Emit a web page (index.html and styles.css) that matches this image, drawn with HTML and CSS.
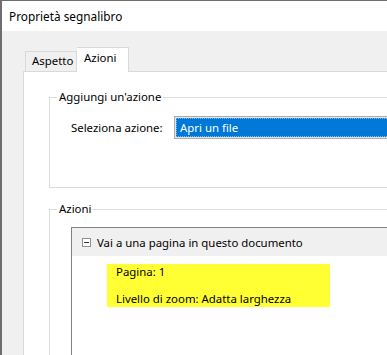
FILE: index.html
```html
<!DOCTYPE html>
<html lang="it">
<head>
  <meta charset="UTF-8">
  <title>Proprietà segnalibro</title>
  <link rel="stylesheet" href="styles.css">
</head>
<body>

  <div class="window">
    <div class="titlebar">Proprietà segnalibro</div>

    <div class="dialog">
      <div class="tabs">
        <div class="tab">Aspetto</div>
        <div class="tab active">Azioni</div>
      </div>

      <div class="panel">
        <fieldset class="group add-group">
          <legend>Aggiungi un'azione</legend>
          <div class="row">
            <span class="label">Seleziona azione:</span>
            <div class="select">
              <div class="select-value">Apri un file</div>
            </div>
          </div>
        </fieldset>

        <fieldset class="group actions-group">
          <legend>Azioni</legend>
          <div class="list">
            <div class="list-head">
              <svg class="toggle" width="9" height="9" viewBox="0 0 9 9">
                <rect x="0.5" y="0.5" width="8" height="8" fill="#fff" stroke="#919191"/>
                <line x1="2" y1="4.5" x2="7" y2="4.5" stroke="#333"/>
              </svg>
              <span>Vai a una pagina in questo documento</span>
            </div>
            <div class="detail">
              <div>Pagina: 1</div>
              <div>Livello di zoom: Adatta larghezza</div>
            </div>
          </div>
        </fieldset>
      </div>
    </div>
  </div>

</body>
</html>
```

FILE: styles.css
```css
* {
  margin: 0;
  padding: 0;
  box-sizing: border-box;
}

body {
  width: 387px;
  height: 355px;
  overflow: hidden;
  background-color: #ffffff;
  font-family: "Noto Sans", "Open Sans", sans-serif;
  font-size: 11.4px;
  color: #000;
}

.window {
  height: 355px;
  border-top: 1px solid #6e6e6e;
  border-left: 2px solid #6e6e6e;
  display: flex;
  flex-direction: column;
}

.titlebar {
  height: 30px;
  line-height: 30px;
  padding-left: 7px;
  font-size: 11.8px;
  background-color: #ffffff;
}

.dialog {
  flex: 1;
  min-height: 0;
  background-color: #f0f0f0;
  padding: 16px 0 0 21px;
  display: flex;
  flex-direction: column;
}

.tabs {
  display: flex;
  align-items: flex-end;
  height: 24px;
  padding-left: 2px;
  position: relative;
  z-index: 1;
}

.tab {
  height: 20px;
  width: 52px;
  line-height: 18px;
  padding-left: 6px;
  border: 1px solid #d9d9d9;
  border-bottom: none;
  background-color: #f0f0f0;
}

.tab.active {
  height: 25px;
  margin-bottom: -1px;
  width: 52px;
  padding-left: 7px;
  line-height: 20px;
  border-left: none;
  background-color: #ffffff;
}

.panel {
  flex: 1;
  min-height: 0;
  background-color: #ffffff;
  border: 1px solid #d9d9d9;
  border-right: none;
  border-bottom: none;
  padding: 17px 0 0 25px;
  display: flex;
  flex-direction: column;
}

.group {
  border: 1px solid #dcdcdc;
  border-right: none;
  padding: 0;
  min-width: 0;
}

.group legend {
  margin-left: 7px;
  padding: 0 2px;
  line-height: 16px;
}

.add-group {
  height: 99px;
  flex: none;
}

.row {
  display: flex;
  align-items: center;
  margin: 11px 0 0 21px;
}

.label {
  width: 103px;
}

.select {
  flex: 1;
  height: 23px;
  border: 1px solid #adadad;
  border-right: none;
  background-color: #e5e5e5;
  padding: 1px 0 1px 1px;
}

.select-value {
  height: 100%;
  background-color: #0078d7;
  color: #ffffff;
  border: 1px dotted #7fb8e8;
  border-right: none;
  line-height: 17px;
  padding-left: 3px;
}

.actions-group {
  margin-top: 13px;
  flex: 1;
  min-height: 0;
  border-bottom: none;
}

.list {
  margin: 10px 0 0 21px;
  height: 100%;
  border: 1px solid #828282;
  border-right: none;
  border-bottom: none;
}

.list-head {
  height: 28px;
  background-color: #f0f0f0;
  display: flex;
  align-items: center;
  padding-left: 10px;
  gap: 6px;
}

.toggle {
  flex: none;
}

.detail {
  margin: 8px 0 0 35px;
  width: 223px;
  height: 43px;
  background-color: #ffff33;
  padding: 0 9px;
  line-height: 16px;
  display: flex;
  flex-direction: column;
  gap: 11px;
}
```
